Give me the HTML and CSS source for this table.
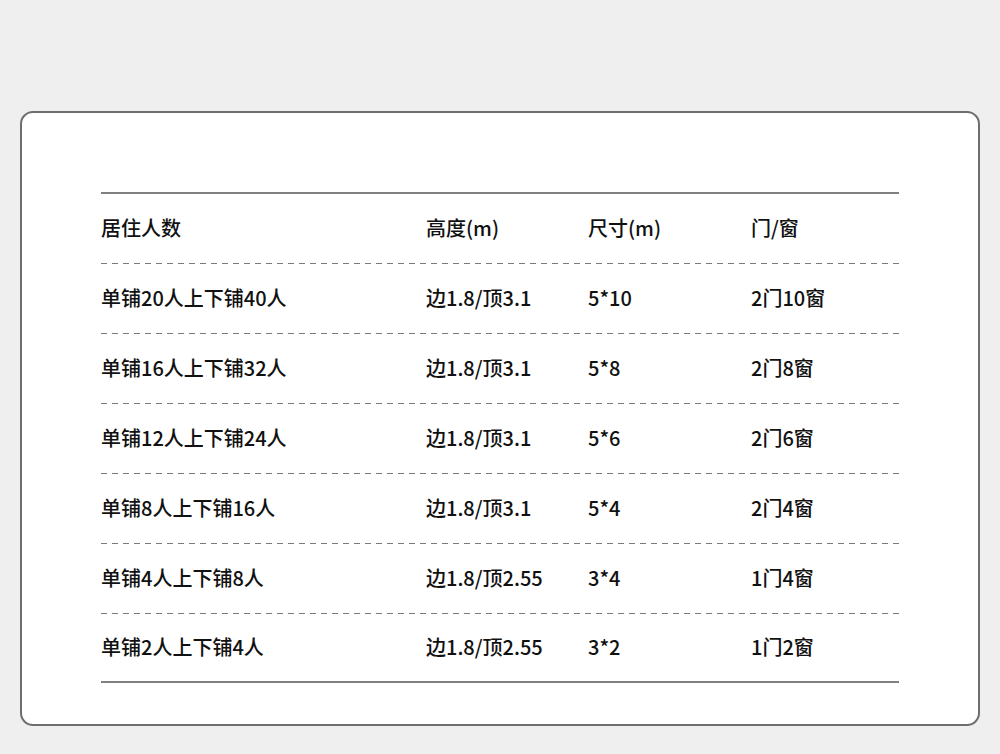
FILE: index.html
```html
<!DOCTYPE html>
<html lang="zh">
<head>
<meta charset="utf-8">
<link rel="stylesheet" href="styles.css">
</head>
<body>
<div class="card">
  <div class="table">
    <div class="row head">
      <div>居住人数</div><div>高度(m)</div><div>尺寸(m)</div><div>门/窗</div>
    </div>
    <div class="row">
      <div>单铺20人上下铺40人</div><div>边1.8/顶3.1</div><div>5*10</div><div>2门10窗</div>
    </div>
    <div class="row">
      <div>单铺16人上下铺32人</div><div>边1.8/顶3.1</div><div>5*8</div><div>2门8窗</div>
    </div>
    <div class="row">
      <div>单铺12人上下铺24人</div><div>边1.8/顶3.1</div><div>5*6</div><div>2门6窗</div>
    </div>
    <div class="row">
      <div>单铺8人上下铺16人</div><div>边1.8/顶3.1</div><div>5*4</div><div>2门4窗</div>
    </div>
    <div class="row">
      <div>单铺4人上下铺8人</div><div>边1.8/顶2.55</div><div>3*4</div><div>1门4窗</div>
    </div>
    <div class="row last">
      <div>单铺2人上下铺4人</div><div>边1.8/顶2.55</div><div>3*2</div><div>1门2窗</div>
    </div>
  </div>
</div>
</body>
</html>
```

FILE: styles.css
```css
html, body {
  margin: 0;
  padding: 0;
  background: #efefef;
}
body {
  width: 1000px;
  height: 754px;
  overflow: hidden;
  font-family: "Noto Sans CJK SC", "Noto Sans", sans-serif;
  color: #111;
}
.card {
  margin: 111px 20px 0;
  height: 615px;
  box-sizing: border-box;
  background: #fff;
  border: 2px solid #6e6e6e;
  border-radius: 13px;
  padding: 79px 79px 0;
}
.table {
  border-top: 2px solid #808080;
  border-bottom: 2px solid #808080;
}
.row {
  display: grid;
  grid-template-columns: 325px 162px 163px 1fr;
  align-items: center;
  height: 70px;
  font-size: 20px;
  font-weight: 500;
  line-height: 1;
  background-image: repeating-linear-gradient(to right, #7a7a7a 0 6px, transparent 6px 11px);
  background-size: 100% 1px;
  background-position: left bottom;
  background-repeat: no-repeat;
  padding-bottom: 3px;
  box-sizing: border-box;
}
.row.last {
  background-image: none;
  height: 67px;
  padding-bottom: 1px;
}
```
